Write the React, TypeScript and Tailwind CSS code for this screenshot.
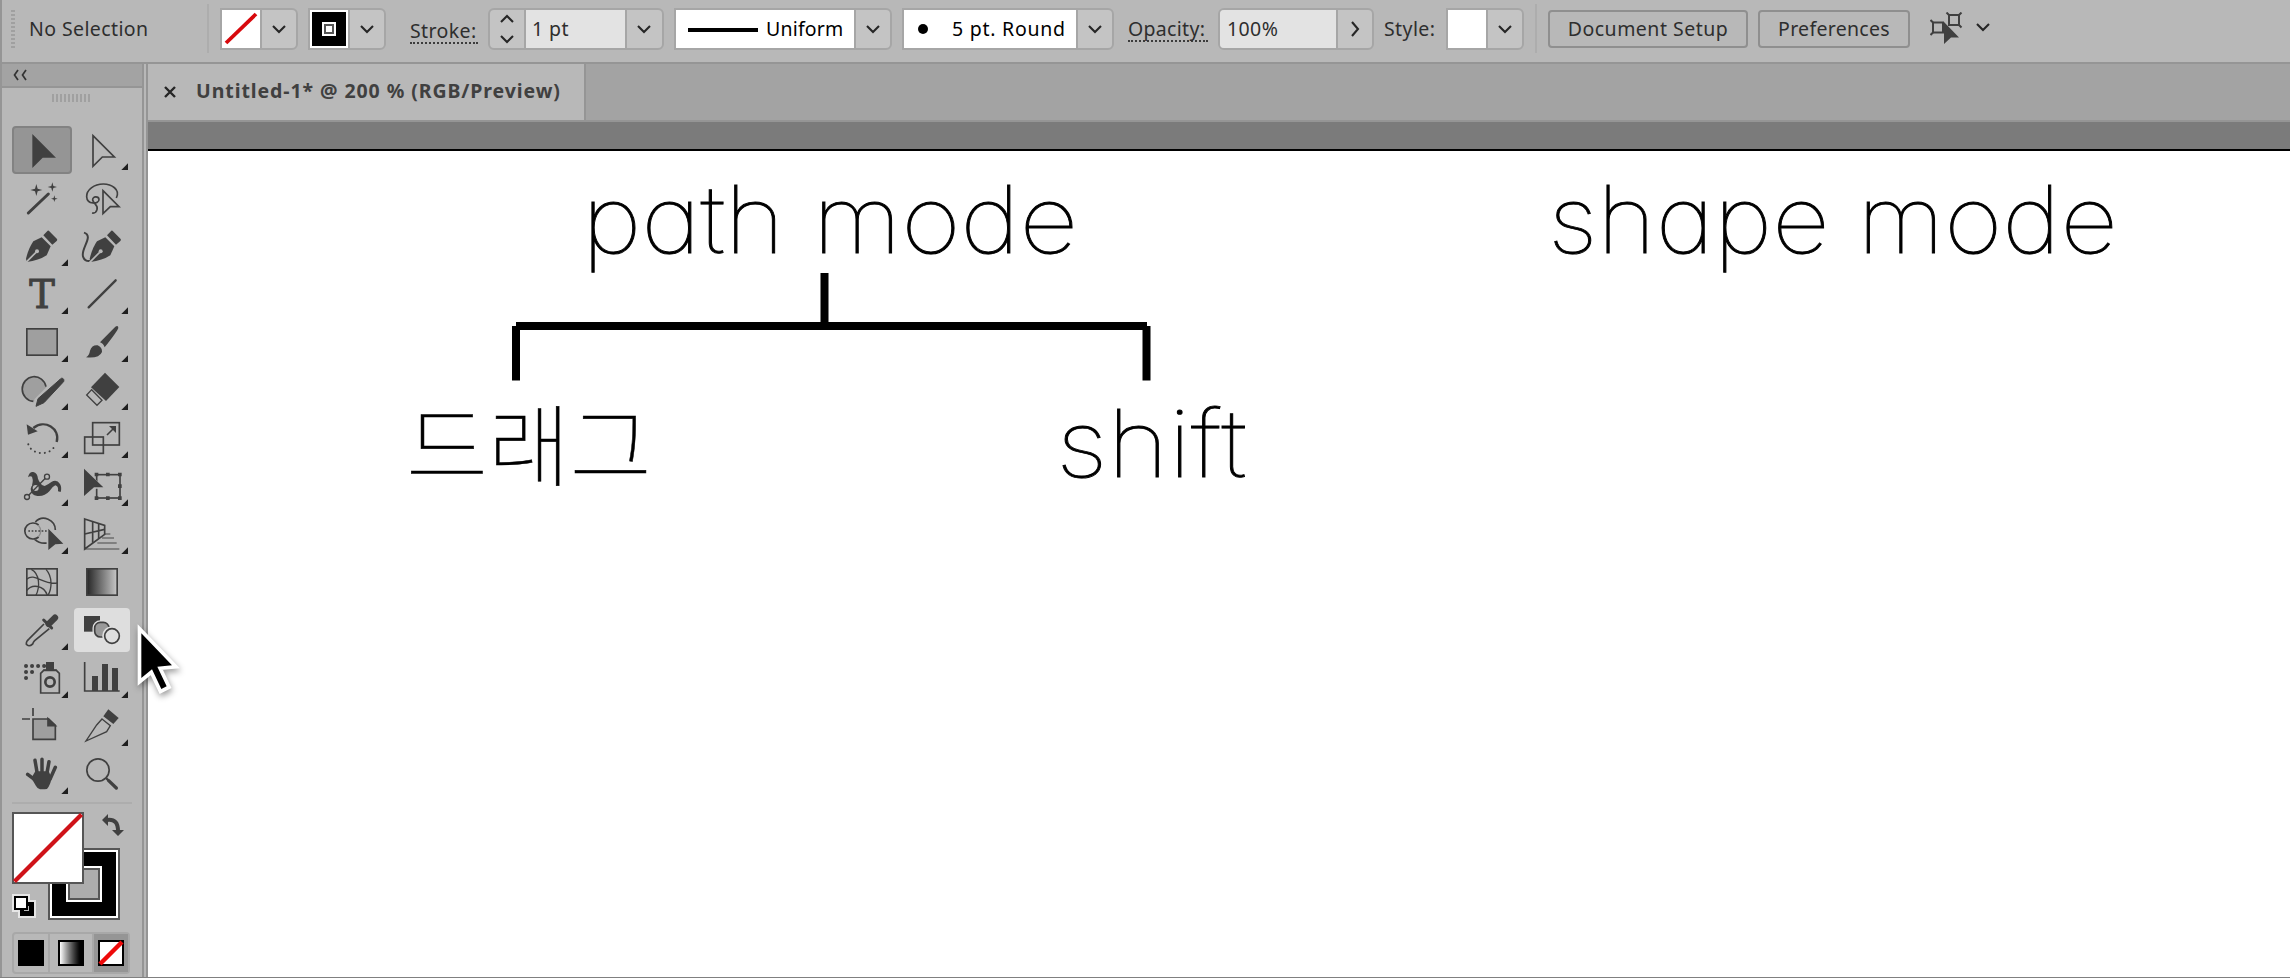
import React from 'react';

const INK = '#404040';
const PANEL = '#b8b8b8';
const SHADE = '#9f9f9f';

interface ChevronProps {
    dir?: 'up' | 'down' | 'right';
    className?: string;
}

const chevronPaths = {
    up: 'M2 9 L8 3 L14 9',
    down: 'M2 3 L8 9 L14 3',
    right: 'M5 -1 L11 6 L5 13',
};

const Chevron: React.FC<ChevronProps> = ({ dir = 'down', className = '' }) => (
    <svg viewBox="0 0 16 12" className={`w-4 h-3 shrink-0 overflow-visible ${className}`}>
        <path d={chevronPaths[dir]} fill="none" stroke="#262626" strokeWidth="2.1" />
    </svg>
);

/** Bordered field with a drop-down cell on the right */
const Combo: React.FC<{ className: string; arrow: string; dir?: 'down' | 'right'; children: React.ReactNode }> = ({
    className,
    arrow,
    dir,
    children,
}) => (
    <div className={`flex h-[42px] shrink-0 overflow-hidden rounded-r-md border-2 border-[#a6a6a6] bg-[#c4c4c4] ${className}`}>
        {children}
        <div className={`flex items-center justify-center border-l-2 border-[#a6a6a6] ${arrow}`}>
            <Chevron dir={dir} />
        </div>
    </div>
);

/* Tool glyphs are drawn on a 180x144 grid, three units to a pixel */

const Cell: React.FC<{ children: React.ReactNode; more?: boolean; state?: 'selected' | 'hover' }> = ({ children, more, state }) => (
    <div className="flex h-12 w-[60px] items-center justify-center">
        <div
            className={
                state === 'selected'
                    ? 'flex h-12 w-[60px] shrink-0 items-center justify-center rounded-[4px] border-2 border-[#828282] bg-[#959595]'
                    : state === 'hover'
                      ? 'flex h-11 w-14 shrink-0 items-center justify-center rounded-[4px] bg-[#dedede]'
                      : 'flex h-12 w-[60px] shrink-0 items-center justify-center'
            }
        >
            <svg viewBox="0 0 180 144" className="h-12 w-[60px] shrink-0" fill="none" stroke={INK} strokeWidth="5">
                {children}
                {more && <path d="M168 112 V132 H148 Z" fill="#1e1e1e" stroke="none" />}
            </svg>
        </div>
    </div>
);

const star = (x: number, y: number, r: number) => {
    const k = r * 0.22;
    return `M${x} ${y - r} L${x + k} ${y - k} L${x + r} ${y} L${x + k} ${y + k} L${x} ${y + r} L${x - k} ${y + k} L${x - r} ${y} L${x - k} ${y - k} Z`;
};

const Nib: React.FC<{ dx: number }> = ({ dx }) => (
    <g transform={`translate(${dx} 0)`} stroke="none" fill={INK}>
        <path d="M107 26 Q110 25 112 28 L135 51 Q137 54 134 57 L121 68 L94 40 Z" />
        <path d="M89 46 L64 58 Q50 78 42 110 L44 120 Q80 116 104 100 L116 73 Z" />
        <path d="M42 121 L72 91" stroke={PANEL} strokeWidth="5" />
        <circle cx="75" cy="88" r="6" fill={PANEL} />
    </g>
);

const Tools: React.FC = () => (
    <div className="grid grid-cols-2">
        <Cell state="selected">
            <path d="M61 24 L132 95 L92 95 L61 126 Z" fill={INK} stroke="none" />
        </Cell>
        <Cell more>
            <path d="M63 29 L127 93 L91 93 L63 121 Z" />
        </Cell>

        <Cell>
            <path d="M49 117 L109 60" strokeWidth="9" strokeLinecap="round" />
            <path d={star(73, 48, 18)} fill={INK} stroke="none" />
            <path d={star(121, 39, 14)} fill={INK} stroke="none" />
            <path d={star(127, 74, 10)} fill={INK} stroke="none" />
        </Cell>
        <Cell>
            <path d="M133 72 C146 46 118 30 94 30 C66 30 43 48 44 68 C45 92 82 92 81 76 C80 66 61 66 62 78 C64 90 80 92 75 107 C73 115 66 118 60 117" />
            <path d="M93 50 L141 98 L115 98 L93 119 Z" fill={PANEL} />
        </Cell>

        <Cell more>
            <Nib dx={0} />
        </Cell>
        <Cell>
            <path d="M36 32 C68 42 22 84 34 106 C38 116 46 118 54 117" strokeWidth="6" />
            <Nib dx={11} />
        </Cell>

        <Cell more>
            <text x="90" y="114" textAnchor="middle" fontFamily="DejaVu Serif, serif" fontSize="115" fill={INK} strokeWidth="3">
                T
            </text>
        </Cell>
        <Cell more>
            <path d="M50 112 L131 31" strokeWidth="7" strokeLinecap="round" />
        </Cell>

        <Cell more>
            <rect x="44.5" y="32.5" width="91" height="79" fill={SHADE} />
        </Cell>
        <Cell more>
            <path d="M130 26 Q139 21 139 30 Q136 40 98 88 Q94 76 84 73 Z" fill={INK} stroke="none" />
            <path d="M42 118 Q52 112 54 98 Q60 80 77 82 Q91 88 90 102 Q82 122 42 118 Z" fill={INK} stroke="none" />
        </Cell>

        <Cell more>
            <path d="M67 106 A36 37 0 1 1 103 64 L67 100 Z" fill={SHADE} stroke="none" />
            <path d="M64 106 A36 37 0 1 1 102 62" />
            <path d="M142 42 Q150 32 155 40 Q158 46 152 50 L96 110 L72 121 L78 98 Z" fill={INK} stroke={INK} strokeWidth="3" strokeLinejoin="round" />
        </Cell>
        <Cell more>
            <path d="M99 20 L142 63 L102 105 L57 64 Z" fill={INK} stroke="none" />
            <path d="M59 71 L90 103 L75 118 L44 87 Z" strokeWidth="4" />
        </Cell>

        <Cell more>
            <path d="M64 42 C98 14 146 44 134 84" strokeWidth="7" />
            <path d="M44 31 L48 62 L77 52 Z" fill={INK} stroke="none" />
            <path d="M49 91 C58 122 112 128 128 96" strokeWidth="6" strokeLinecap="round" strokeDasharray="0.1 15" />
        </Cell>
        <Cell more>
            <rect x="62" y="26" width="80" height="67" />
            <rect x="38" y="69" width="56" height="49" />
            <path d="M105 63 L126 42" />
            <path d="M111 36 H132 V57 Z" fill={INK} stroke="none" />
        </Cell>

        <Cell more>
            <path
                d="M48 46 Q52 28 64 30 Q76 32 78 50 Q84 68 98 72 Q108 68 118 60 Q134 50 144 66 Q150 76 146 90 L138 88 Q140 72 130 70 Q120 74 112 88 Q98 104 76 102 Q56 98 56 80 Q66 60 60 44 Q54 40 48 46 Z"
                fill={INK}
                stroke="none"
            />
            <circle cx="71" cy="78" r="11" fill={PANEL} strokeWidth="4" />
            <path d="M50 100 L100 49" strokeWidth="4" />
            <circle cx="45" cy="105" r="7.5" fill={PANEL} strokeWidth="4" />
            <circle cx="105" cy="44" r="7.5" fill={PANEL} strokeWidth="4" />
        </Cell>
        <Cell more>
            <rect x="74" y="38" width="70" height="70" />
            <path d="M29 10 L98 80 L72 80 L34 114 Z" fill={PANEL} stroke="none" />
            <path d="M36 20 L94 76 H66 L36 102 Z" fill={INK} stroke="none" />
            <path d="M68 32h11v11h-11z M102 32h11v11h-11z M138 32h11v11h-11z M138 67h11v11h-11z M138 103h11v11h-11z M102 103h11v11h-11z M68 103h11v11h-11z" fill={INK} stroke="none" />
        </Cell>

        <Cell more>
            <path d="M80 47 A24 24 0 0 1 80 79" stroke="#8a8a8a" strokeWidth="4" />
            <path d="M70 36 C92 12 130 30 130 60 M68 88 C80 99 90 101 104 99 M80 45 A25 24 0 1 0 80 81" />
            <path d="M49 63 H108" strokeDasharray="5 5" />
            <path d="M109 56 L154 101 L130 103 L109 120 Z" fill={INK} stroke="none" />
        </Cell>
        <Cell more>
            <path d="M80 72 H115 M90 84 H126 M76 99 H134 M38 117 H142" stroke="#808080" strokeWidth="6" />
            <path d="M38 27 L98 46 V73 L38 117 Z" fill={PANEL} />
            <path d="M62 34 V98 M80 40 V86 M38 72 L98 58" />
        </Cell>

        <Cell>
            <rect x="44.5" y="32.5" width="91" height="79" />
            <path d="M58 34 C84 48 84 86 72 112 M102 34 C122 56 120 92 108 112 M44 64 C68 42 92 82 136 75 M44 98 C60 76 96 82 106 112" strokeWidth="4" />
        </Cell>
        <Cell>
            <defs>
                <linearGradient id="toolGradient">
                    <stop offset="0" stopColor="#262626" />
                    <stop offset="1" stopColor="#c8c8c8" />
                </linearGradient>
            </defs>
            <rect x="44.5" y="32.5" width="91" height="79" fill="url(#toolGradient)" />
        </Cell>

        <Cell more>
            <path d="M96 54 L52 98 Q42 106 43 115 Q50 124 62 114 Q64 108 68 104 L112 68" />
            <path d="M95 42 L119 66" strokeWidth="9" strokeLinecap="round" />
            <path d="M110 54 L129 35" strokeWidth="19" strokeLinecap="round" />
        </Cell>
        <Cell state="hover">
            <path d="M36 30 H84 V77 H36 Z" fill={INK} stroke="none" />
            <rect x="68" y="49" width="43" height="44" rx="17" fill="#999" stroke="#dedede" strokeWidth="13" />
            <rect x="68" y="49" width="43" height="44" rx="17" fill="#999" />
            <circle cx="120" cy="90" r="23" fill="#dedede" stroke="#dedede" strokeWidth="13" />
            <circle cx="120" cy="90" r="22" fill="#dedede" />
        </Cell>

        <Cell more>
            <path d="M42 36 H100 M42 54 H62 M42 72 H43" strokeWidth="12" strokeLinecap="round" strokeDasharray="0.1 18" />
            <path d="M102 24 H126 V46 H134 V50 H94 V46 H102 Z" fill={INK} stroke="none" />
            <path d="M95 49 H133 L142 58 V117 H86 V58 Z" />
            <circle cx="114" cy="84" r="14" strokeWidth="8" />
        </Cell>
        <Cell more>
            <path d="M38 24 V111 H143" />
            <path d="M60 66h18v45h-18z M90 30h18v81h-18z M120 42h18v69h-18z" fill={INK} stroke="none" />
        </Cell>

        <Cell>
            <path d="M63 18 V42 M30 51 H54" />
            <path d="M63 51 H110 L130 70 V112 H63 Z" fill={SHADE} />
            <path d="M108 50 L130 71 H108 Z" fill={INK} />
        </Cell>
        <Cell more>
            <path d="M109 22 L140 48 L124 66 L94 43 Z" fill={INK} stroke="none" />
            <path d="M90 51 L115 71 L104 89 L42 117 L74 69 Z" strokeWidth="4" />
        </Cell>

        <Cell more>
            <path d="M47 73 L72 92 M69 31 L76 72 M90 28 V72 M111 35 L104 74 M130 52 L114 88" strokeWidth="10.5" strokeLinecap="round" />
            <path d="M70 64 H110 L119 84 Q116 100 110 110 Q107 118 98 118 H84 Q76 116 72 108 L58 84 Z" fill={INK} stroke="none" />
        </Cell>
        <Cell>
            <circle cx="78" cy="60" r="33.5" />
            <path d="M102 84 L110 92" strokeWidth="7" />
            <path d="M110 92 L133 114" strokeWidth="10" strokeLinecap="round" />
        </Cell>
    </div>
);

/** Fill / stroke proxy with swap and reset arrows */
const ColorProxy: React.FC = () => (
    <svg viewBox="12 812 120 112" className="h-[112px] w-[120px]" shapeRendering="crispEdges">
        <rect x="49" y="849" width="70" height="70" fill="#fff" stroke="#565656" strokeWidth="2" />
        <rect x="52" y="852" width="64" height="64" fill="#000" />
        <rect x="66" y="866" width="36" height="36" fill="#fff" />
        <rect x="69" y="869" width="30" height="30" fill="#adadad" stroke="#565656" strokeWidth="2" />
        <rect x="13" y="813" width="70" height="70" fill="#fff" stroke="#565656" strokeWidth="2" />
        <path d="M14.5 881.5 L81.5 814.5" stroke="#cf1218" strokeWidth="4.2" shapeRendering="auto" />
        <g shapeRendering="auto">
            <path d="M107 820 C115 819 118 823 118 831" fill="none" stroke={INK} strokeWidth="4" />
            <path d="M102 820 L108 814 V826 Z M112 830 H124 L118 836 Z" fill={INK} />
        </g>
        <path d="M12 894 H30 V900 H36 V918 H18 V912 H12 Z" fill="#e6e6e6" />
        <path d="M20 902 H34 V916 H20 Z" fill="#000" />
        <rect x="24" y="906" width="5" height="5" fill="#b8b8b8" />
        <rect x="15" y="897" width="12" height="12" fill="#fff" stroke="#000" strokeWidth="2" />
    </svg>
);

const Sidebar: React.FC = () => (
    <aside className="flex h-[913px] w-[148px] shrink-0 border-r-2 border-l-2 border-[#959595]">
        <div className="flex w-[142px] shrink-0 flex-col border-r-2 border-[#959595]">
            <div className="flex h-6 shrink-0 items-center border-b-2 border-[#959595] bg-[#a3a3a3] pl-[11px]">
                <svg viewBox="0 0 14 12" className="h-3 w-[14px]">
                    <path d="M5 1 L1.5 6 L5 11 M13 1 L9.5 6 L13 11" fill="none" stroke="#333" strokeWidth="1.7" />
                </svg>
            </div>
            <div className="mt-[6px] ml-[50px] flex h-2 gap-0.5">
                {Array.from({ length: 10 }, (_, i) => (
                    <i key={i} className="w-0.5 bg-[#a0a0a0]" />
                ))}
            </div>
            <div className="mt-6 ml-[10px] w-[120px] shrink-0">
                <Tools />
            </div>
            <div className="mt-1 ml-[10px] h-0.5 w-[120px] shrink-0 bg-[#adadad]" />
            <div className="mt-2 ml-[10px] shrink-0">
                <ColorProxy />
            </div>
            <div className="mt-2 ml-[10px] flex h-[42px] w-[118px] shrink-0 rounded-[4px] border-2 border-[#a8a8a8]">
                <div className="flex w-[34px] items-center justify-center">
                    <div className="h-[26px] w-[26px] bg-black" />
                </div>
                <div className="flex w-[44px] items-center justify-center border-l-2 border-[#a8a8a8]">
                    <div className="h-[26px] w-[26px] border-2 border-black bg-linear-to-r from-white to-black" />
                </div>
                <div className="flex flex-1 items-center justify-center border-l-2 border-[#a8a8a8] bg-[#959595]">
                    <svg viewBox="0 0 26 26" className="h-[26px] w-[26px]">
                        <path d="M1 1 H25 V25 H1 Z" fill="#fff" stroke="#000" strokeWidth="2" />
                        <path d="M2 24 L24 2" stroke="#ee0a0a" strokeWidth="4.5" />
                    </svg>
                </div>
            </div>
        </div>
    </aside>
);

const OptionsBar: React.FC = () => (
    <header className="flex h-16 shrink-0 items-start border-b-2 border-l-2 border-[#959595] pt-2 text-[19.5px] leading-[42px] tracking-[0.4px] whitespace-nowrap text-[#2e2e2e]">
        <div className="mt-0.5 ml-[9px] flex w-1 shrink-0 flex-col gap-0.5">
            {Array.from({ length: 10 }, (_, i) => (
                <i key={i} className="h-0.5 bg-[#a0a0a0]" />
            ))}
        </div>
        <div className="ml-[14px] w-[178px] shrink-0">No Selection</div>
        <div className="-mt-1 h-[49px] w-0.5 shrink-0 bg-[#adadad]" />

        <Combo className="ml-[11px] w-[78px]" arrow="flex-1">
            <svg viewBox="0 0 38 38" className="h-[38px] w-[38px] bg-white">
                <path d="M4 33 L34 4" stroke="#d8090d" strokeWidth="3.8" />
            </svg>
        </Combo>
        <Combo className="ml-[10px] w-[78px]" arrow="flex-1">
            <svg viewBox="0 0 38 38" className="h-[38px] w-[38px] bg-white">
                <path d="M2 2 H36 V36 H2 Z" fill="#000" />
                <path d="M12 12 H26 V26 H12 Z" fill="#fff" />
                <path d="M15 15 H23 V23 H15 Z" fill="#fff" stroke="#565656" strokeWidth="2" />
            </svg>
        </Combo>

        <div className="mt-[11px] ml-6 h-[25px] w-[68px] shrink-0 border-b-2 border-dotted border-[#3c3c3c] leading-[24px]">Stroke:</div>
        <Combo className="ml-[10px] w-[176px] rounded-md" arrow="w-[37px] pr-0.5">
            <div className="flex w-9 flex-col items-center justify-between border-r-2 border-[#a6a6a6] py-[3px]">
                <Chevron dir="up" />
                <Chevron />
            </div>
            <div className="flex-1 bg-[#e3e3e3] pl-[6px] leading-[38px]">1 pt</div>
        </Combo>
        <Combo className="ml-[10px] w-[218px]" arrow="w-9">
            <div className="flex flex-1 items-center bg-white pl-3 leading-[40px] tracking-[0.2px] text-black">
                <i className="mt-0.5 mr-[8px] h-1 w-[70px] bg-black" />
                Uniform
            </div>
        </Combo>
        <Combo className="ml-[10px] w-[212px]" arrow="w-9">
            <div className="flex flex-1 items-center bg-white pl-[14px] leading-[38px] tracking-[0.75px] text-black">
                <i className="mr-[24px] h-[10px] w-[10px] rounded-full bg-black" />
                5 pt. Round
            </div>
        </Combo>

        <div className="mt-[9px] ml-[14px] h-[25px] w-[80px] shrink-0 border-b-2 border-dotted border-[#3c3c3c] leading-[24px] tracking-[0.3px]">Opacity:</div>
        <Combo className="ml-[10px] w-[156px] rounded-md" arrow="w-9" dir="right">
            <div className="flex-1 bg-[#e3e3e3] pl-[7px] leading-[38px]">100%</div>
        </Combo>
        <div className="ml-[10px] w-[62px] shrink-0">Style:</div>
        <Combo className="w-[78px]" arrow="flex-1">
            <div className="w-[38px] bg-white" />
        </Combo>
        <div className="-mt-1 ml-[11px] h-[49px] w-0.5 shrink-0 bg-[#adadad]" />

        <button className="mt-0.5 ml-[11px] h-[38px] w-[200px] shrink-0 rounded-[4px] border-2 border-[#8f8f8f] text-center leading-[34px] tracking-[0.5px]">
            Document Setup
        </button>
        <button className="mt-0.5 ml-[10px] h-[38px] w-[152px] shrink-0 rounded-[4px] border-2 border-[#8f8f8f] text-center leading-[34px] tracking-[0.3px]">
            Preferences
        </button>

        <svg viewBox="1930 12 34 34" className="mt-1 ml-5 h-[34px] w-[34px] shrink-0">
            <g fill="none" stroke={INK} strokeWidth="2">
                <rect x="1933" y="22.5" width="10" height="10" />
                <rect x="1949" y="15" width="10" height="10" />
                <path d="M1930.5 20 L1933 22.5 M1930.5 35 L1933 32.5 M1946.5 12.5 L1949 15 M1961.5 12.5 L1959 15 M1961.5 27.5 L1959 25" />
            </g>
            <path d="M1944 22 L1959 37.5 H1951 L1944 44 Z" fill={INK} />
        </svg>
        <Chevron className="mt-[13px] ml-[11px]" />
    </header>
);

const Artboard: React.FC = () => (
    <main className="relative flex-1 overflow-hidden bg-white font-[Inter,'Noto_Sans_CJK_KR',sans-serif] text-[94px] leading-[100px] font-thin whitespace-nowrap text-black [font-feature-settings:'cv11'] [-webkit-text-stroke:0.9px_#000]">
        <div className="absolute top-[18px] left-[434px] origin-left scale-x-[1.09] tracking-[-0.003em]">path mode</div>
        <div className="absolute top-[18px] left-[1400px] origin-left scale-x-[1.065]">shape mode</div>
        <svg viewBox="512 273 640 108" className="absolute top-[122px] left-[364px] h-[108px] w-[640px]">
            <path d="M824.5 273 V326 M516 326 H1147 M516 326 V380.5 M1146.5 326 V380.5" stroke="#000" strokeWidth="8" fill="none" />
        </svg>
        <div className="absolute top-[240px] left-[258px] font-['Noto_Sans_CJK_KR',sans-serif] text-[89px] [-webkit-text-stroke:0.5px_#000]">드래그</div>
        <div className="absolute top-[242px] left-[908px] origin-left scale-x-[1.11]">shift</div>
    </main>
);

const App: React.FC = () => (
    <div className="relative flex h-[978px] w-[2290px] flex-col overflow-hidden bg-[#b8b8b8] font-['Noto_Sans','Open_Sans',sans-serif]">
        <OptionsBar />
        <div className="flex h-[913px] shrink-0">
            <Sidebar />
            <div className="flex min-w-0 flex-1 flex-col">
                <div className="flex h-[58px] shrink-0 border-b-2 border-[#959595] bg-[#a3a3a3]">
                    <div className="flex w-[438px] items-center border-r-2 border-[#959595] bg-[#b8b8b8] pl-4 text-[19.5px] font-bold tracking-[0.92px] whitespace-nowrap text-[#404040]">
                        <svg viewBox="0 0 12 12" className="h-3 w-3 shrink-0">
                            <path d="M1 1 L11 11 M11 1 L1 11" stroke="#262626" strokeWidth="2.4" />
                        </svg>
                        <span className="-mt-0.5 ml-5">Untitled-1* @ 200 % (RGB/Preview)</span>
                    </div>
                </div>
                <div className="h-[29px] shrink-0 border-b-2 border-black bg-[#7b7b7b]" />
                <Artboard />
            </div>
        </div>
        <div className="h-px shrink-0 bg-[#808080]" />

        {/* Mouse pointer */}
        <svg viewBox="0 0 180 270" className="absolute top-[618px] left-[130px] h-[90px] w-[60px] overflow-visible drop-shadow-[1px_3px_3px_rgba(0,0,0,0.4)]">
            <path d="M34 46 L126 142 L82 146 L110 205 L94 213 L66 154 L34 180 Z" fill="#000" stroke="#fff" strokeWidth="22" paintOrder="stroke" />
        </svg>
    </div>
);

export default App;
